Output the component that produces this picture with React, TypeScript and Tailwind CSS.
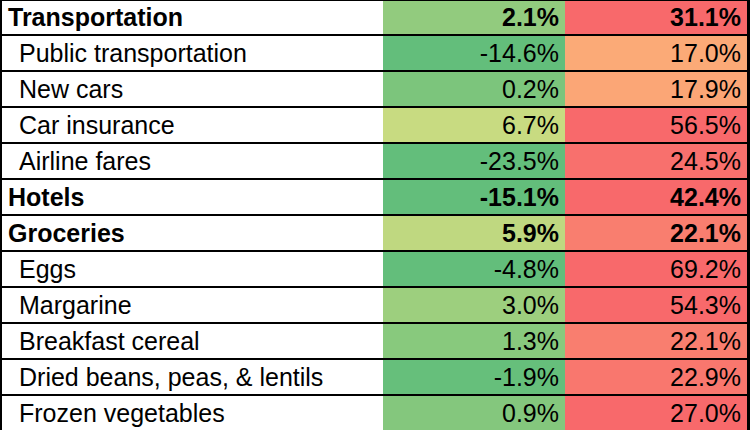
type Row = {
  label: string;
  bold?: boolean;
  a: string;
  aBg: string;
  b: string;
  bBg: string;
};

const rows: Row[] = [
  { label: "Transportation", bold: true, a: "2.1%", aBg: "bg-[#92cb7e]", b: "31.1%", bBg: "bg-[#f8696b]" },
  { label: "Public transportation", a: "-14.6%", aBg: "bg-[#63be7b]", b: "17.0%", bBg: "bg-[#fbaa77]" },
  { label: "New cars", a: "0.2%", aBg: "bg-[#7cc57c]", b: "17.9%", bBg: "bg-[#fba676]" },
  { label: "Car insurance", a: "6.7%", aBg: "bg-[#c8db81]", b: "56.5%", bBg: "bg-[#f8696b]" },
  { label: "Airline fares", a: "-23.5%", aBg: "bg-[#63be7b]", b: "24.5%", bBg: "bg-[#f8706d]" },
  { label: "Hotels", bold: true, a: "-15.1%", aBg: "bg-[#63be7b]", b: "42.4%", bBg: "bg-[#f8696b]" },
  { label: "Groceries", bold: true, a: "5.9%", aBg: "bg-[#bfd880]", b: "22.1%", bBg: "bg-[#f97e6f]" },
  { label: "Eggs", a: "-4.8%", aBg: "bg-[#63be7b]", b: "69.2%", bBg: "bg-[#f8696b]" },
  { label: "Margarine", a: "3.0%", aBg: "bg-[#9dcf7e]", b: "54.3%", bBg: "bg-[#f8696b]" },
  { label: "Breakfast cereal", a: "1.3%", aBg: "bg-[#88c97d]", b: "22.1%", bBg: "bg-[#f97e6f]" },
  { label: "Dried beans, peas, & lentils", a: "-1.9%", aBg: "bg-[#66bf7b]", b: "22.9%", bBg: "bg-[#f9776e]" },
  { label: "Frozen vegetables", a: "0.9%", aBg: "bg-[#84c77d]", b: "27.0%", bBg: "bg-[#f8696b]" },
];

export default function App() {
  return (
    <div className="w-[750px] h-[430px] overflow-hidden bg-white text-black font-['Liberation_Sans',Arial,sans-serif]">
      <div className="border-t border-l-2 border-r-[3px] border-black">
        {rows.map((r, i) => (
          <div
            key={r.label}
            className={
              "grid grid-cols-[381px_182px_1fr] border-b-2 border-black " +
              (i === 0 ? "h-[35px]" : "h-[36px]")
            }
          >
            {/* label */}
            <div
              className={
                "flex items-center text-[25px] leading-none whitespace-nowrap " +
                (r.bold ? "font-bold pl-[6px]" : "pl-[17px]")
              }
            >
              {r.label}
            </div>
            <div
              className={
                "flex items-center justify-end pr-[6px] text-[25px] leading-none " +
                r.aBg +
                (r.bold ? " font-bold" : "")
              }
            >
              {r.a}
            </div>
            <div
              className={
                "flex items-center justify-end pr-[6px] text-[25px] leading-none " +
                r.bBg +
                (r.bold ? " font-bold" : "")
              }
            >
              {r.b}
            </div>
          </div>
        ))}
      </div>
    </div>
  );
}
